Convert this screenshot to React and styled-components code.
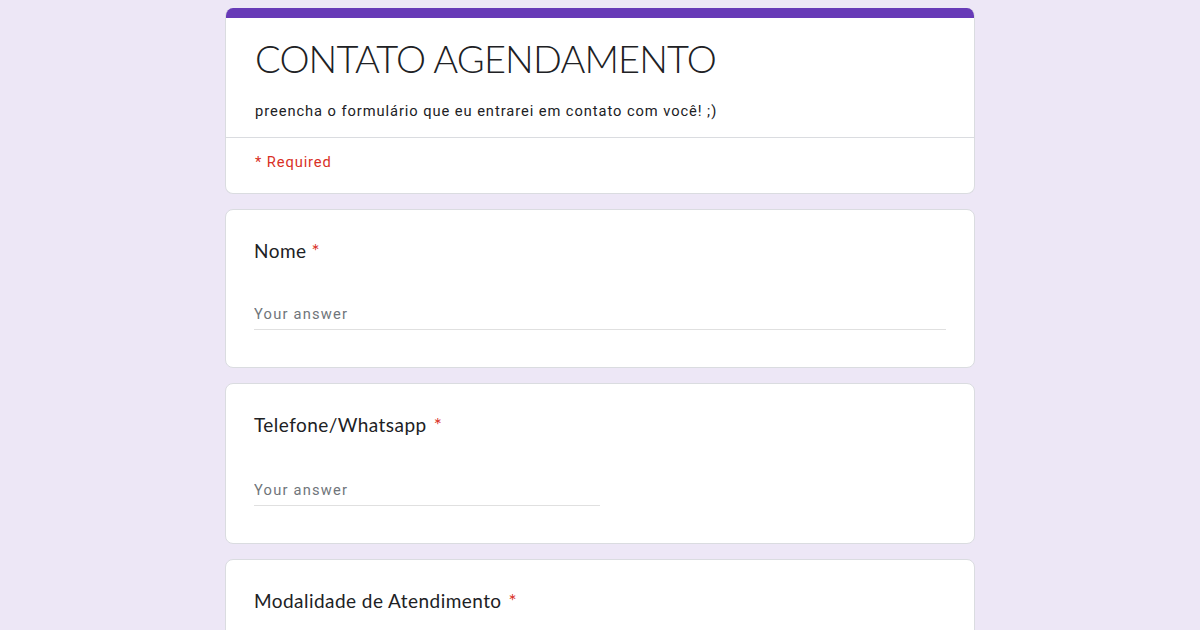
import React from "react";
import styled, { createGlobalStyle } from "styled-components";

const GlobalStyle = createGlobalStyle`
  html, body {
    margin: 0;
    padding: 0;
    background: #ede7f6;
    overflow: hidden;
  }
  * {
    box-sizing: border-box;
  }
`;

const questions = [
  { label: "Nome", wide: true },
  { label: "Telefone/Whatsapp", wide: false, gap: true, tall: true },
];

function App() {
  return (
    <>
      <GlobalStyle />
      <Page>
        <HeaderCard>
          <TopBar />
          <HeaderBody>
            <Title>CONTATO AGENDAMENTO</Title>
            <Description>
              preencha o formulário que eu entrarei em contato com você! ;)
            </Description>
          </HeaderBody>
          <RequiredNote>* Required</RequiredNote>
        </HeaderCard>

        {questions.map((q) => (
          <QuestionCard key={q.label} $tall={q.tall}>
            <Label>
              {q.label}
              <Star $spaced={q.gap}>*</Star>
            </Label>
            <AnswerInput
              $wide={q.wide}
              $tall={q.tall}
              placeholder="Your answer"
            />
          </QuestionCard>
        ))}

        <QuestionCard>
          <Label>
            Modalidade de Atendimento
            <Star $spaced>*</Star>
          </Label>
        </QuestionCard>
      </Page>
    </>
  );
}

export default App;

const Page = styled.div`
  width: 750px;
  margin: 8px auto 0;
  display: flex;
  flex-direction: column;
  gap: 15px;
`;

const Card = styled.div`
  background: #ffffff;
  border: 1px solid #dadce0;
  border-radius: 8px;
  overflow: hidden;
`;

const HeaderCard = styled(Card)`
  border-top: none;
`;

const TopBar = styled.div`
  height: 10px;
  background: #673ab7;
`;

const HeaderBody = styled.div`
  padding: 14px 29px 15px;
  border-bottom: 1px solid #dadce0;
`;

const Title = styled.h1`
  margin: 0;
  font-family: Lato, "Noto Sans", sans-serif;
  font-weight: 300;
  font-size: 38px;
  line-height: 52px;
  letter-spacing: -0.85px;
  color: #202124;
`;

const Description = styled.div`
  margin-top: 16px;
  font-family: Roboto, "Liberation Sans", sans-serif;
  font-size: 14.7px;
  line-height: 22px;
  letter-spacing: 0.93px;
  color: #202124;
`;

const RequiredNote = styled.div`
  padding: 14px 29px 21px;
  font-family: Roboto, "Liberation Sans", sans-serif;
  font-size: 14.7px;
  line-height: 20px;
  letter-spacing: 0.9px;
  color: #d93025;
`;

const QuestionCard = styled(Card)`
  padding: 29px 28px 37px;
  min-height: ${(p) => (p.$tall ? "160px" : "158px")};
`;

const Label = styled.div`
  font-family: Lato, "Noto Sans", sans-serif;
  font-size: 19px;
  line-height: 24px;
  letter-spacing: 0.45px;
  color: #202124;
`;

const Star = styled.span`
  color: #d93025;
  margin-left: ${(p) => (p.$spaced ? "7px" : "5px")};
`;

const AnswerInput = styled.input`
  display: block;
  margin-top: ${(p) => (p.$tall ? "43px" : "41px")};
  width: ${(p) => (p.$wide ? "100%" : "50%")};
  border: none;
  border-bottom: 1px solid #e0e0e0;
  outline: none;
  padding: 0 0 5px;
  font-family: Roboto, "Liberation Sans", sans-serif;
  font-size: 14.7px;
  line-height: 20px;
  color: #202124;
  background: transparent;

  &::placeholder {
    color: #70757a;
    letter-spacing: 1.2px;
  }
`;
